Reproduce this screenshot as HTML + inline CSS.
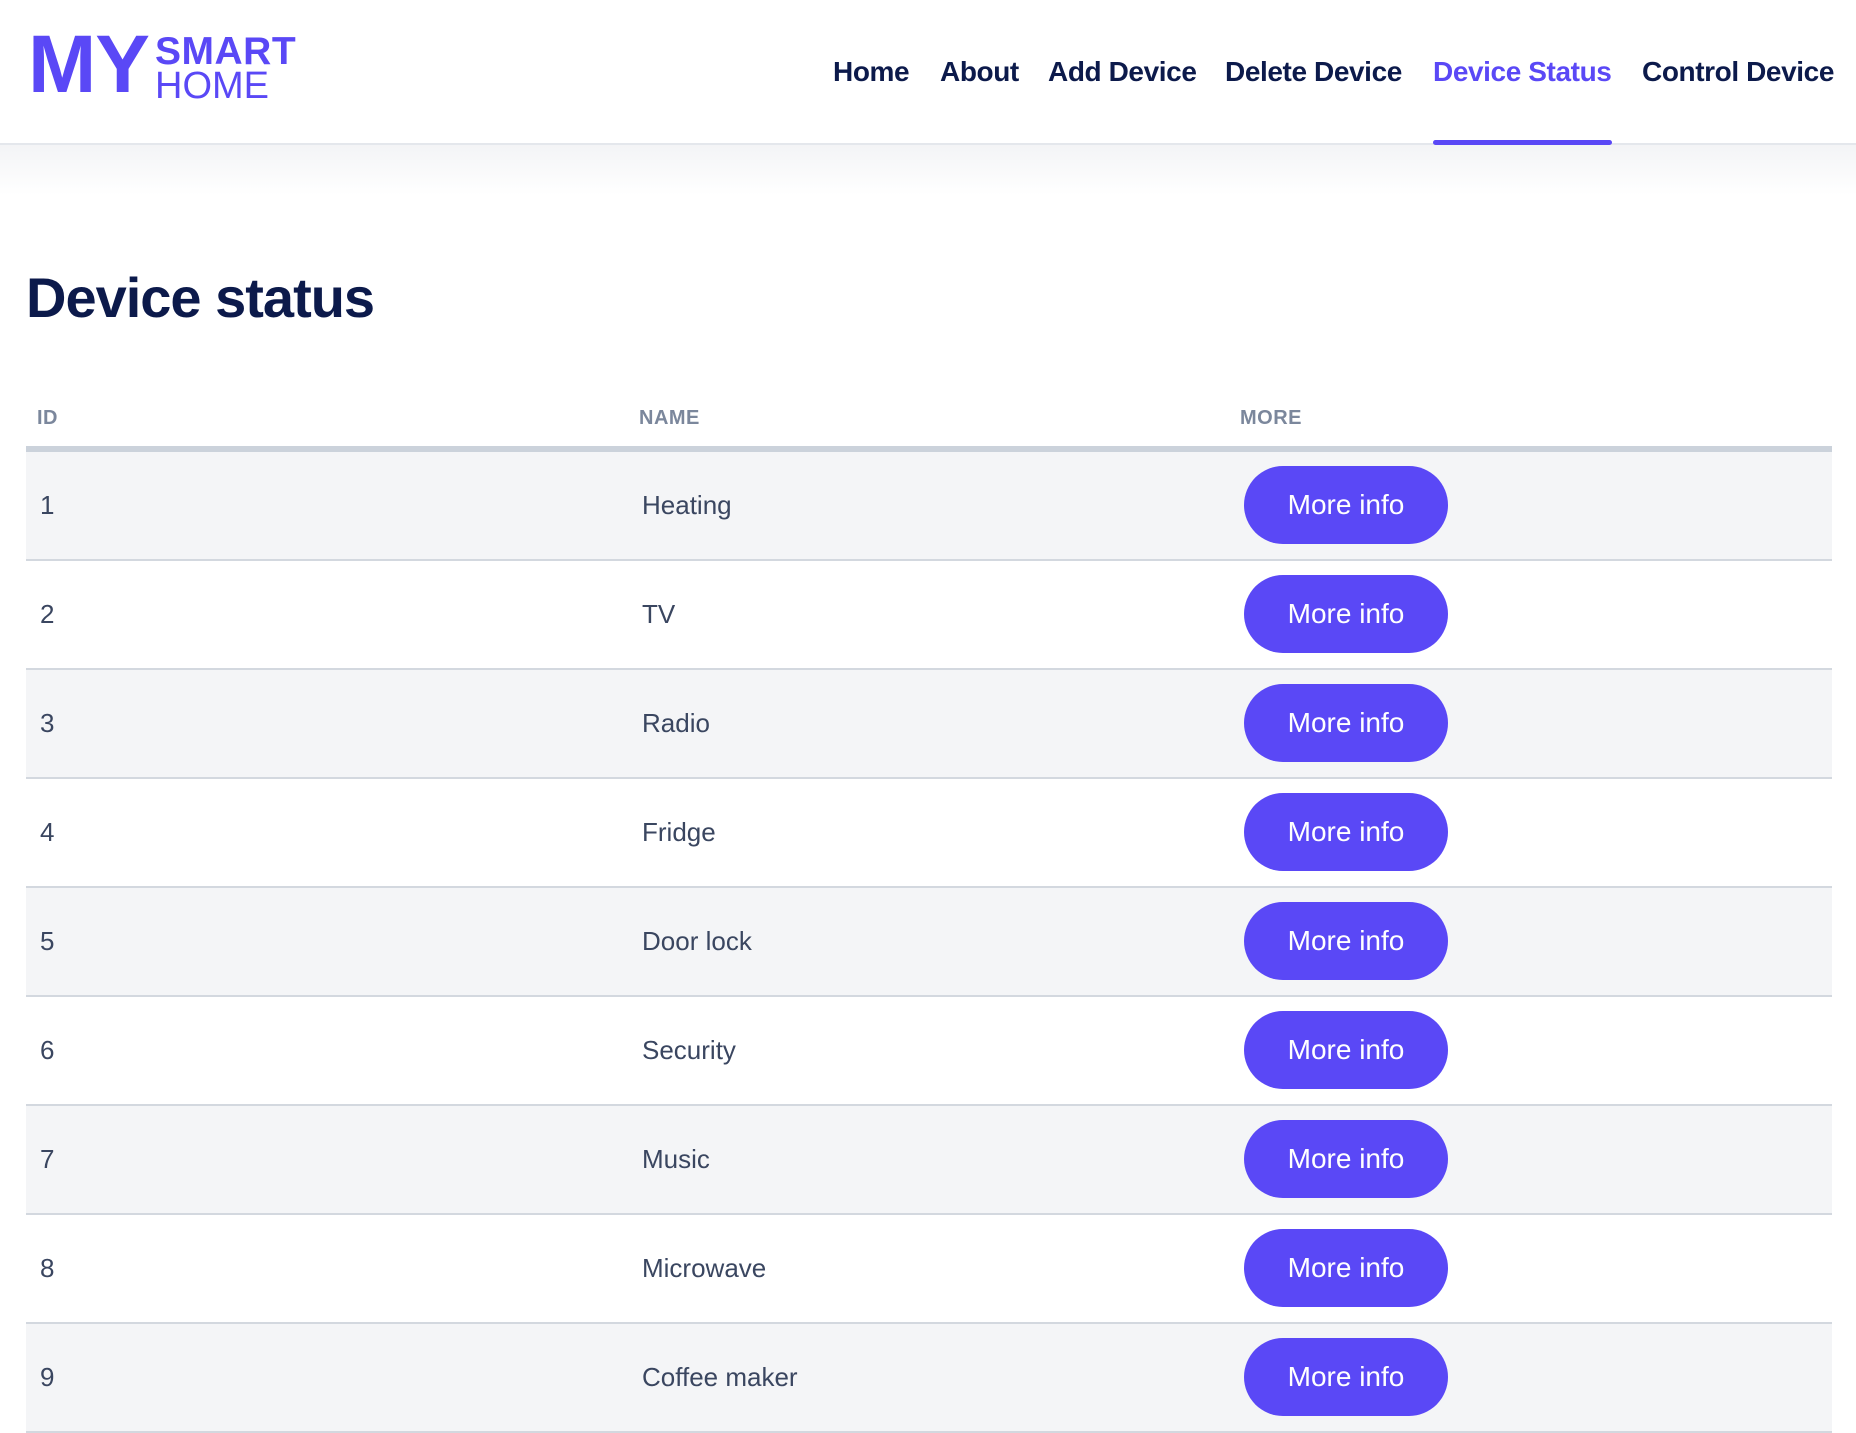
<!DOCTYPE html>
<html><head><meta charset="utf-8"><style>
*{margin:0;padding:0;box-sizing:border-box}
body{width:1856px;height:1432px;overflow:hidden;background:#fff;font-family:"Liberation Sans",sans-serif;position:relative}
.hdr{position:absolute;left:0;top:0;width:1856px;height:145px;border-bottom:2px solid #e4e7ec;background:#fff}
.shadow{position:absolute;left:0;top:145px;width:1856px;height:50px;background:linear-gradient(#f3f4f6,#fff)}
.logo{position:absolute;color:#5a48f6;white-space:nowrap;line-height:1}
.nav{position:absolute;top:56px;font-size:28px;letter-spacing:-0.4px;font-weight:bold;color:#0c1a4b;white-space:nowrap;line-height:32px}
.act{color:#5a48f6}
.ul{position:absolute;left:1433px;top:140px;width:179px;height:5px;background:#5a48f6;border-radius:3px}
h1{position:absolute;left:26px;top:266px;font-size:56px;letter-spacing:-1px;color:#0c1a4b;font-weight:bold;line-height:64px}
.th{position:absolute;top:406px;font-size:20px;font-weight:bold;color:#7b879c;letter-spacing:.5px;line-height:24px}
.thick{position:absolute;left:26px;top:446px;width:1806px;height:6px;background:#cbd2db}
.row{position:absolute;left:26px;width:1806px;height:109px;border-bottom:2px solid #d3d8df}
.row.odd{background:#f4f5f7}
.row span{position:absolute;top:38px;font-size:26px;color:#3a4660;line-height:30px}
.btn{position:absolute;left:1218px;top:14px;width:204px;height:78px;border-radius:39px;background:#5a48f6;color:#fff;font-size:28px;text-align:center;line-height:78px}
</style></head><body>
<div class="hdr"></div>
<div class="shadow"></div>
<div class="logo" style="left:28px;top:24px;font-size:82px;font-weight:bold;letter-spacing:-1px">MY</div>
<div class="logo" style="left:155px;top:32px;font-size:39px;font-weight:bold;letter-spacing:.5px">SMART</div>
<div class="logo" style="left:155px;top:67px;font-size:38px">HOME</div>
<div class="nav" style="left:833px">Home</div>
<div class="nav" style="left:940px">About</div>
<div class="nav" style="left:1048px">Add Device</div>
<div class="nav" style="left:1225px">Delete Device</div>
<div class="nav act" style="left:1433px">Device Status</div>
<div class="nav" style="left:1642px">Control Device</div>
<div class="ul"></div>
<h1>Device status</h1>
<div class="th" style="left:37px">ID</div>
<div class="th" style="left:639px">NAME</div>
<div class="th" style="left:1240px">MORE</div>
<div class="thick"></div>
<div class="row odd" style="top:452px"><span style="left:14px">1</span><span style="left:616px">Heating</span><div class="btn">More info</div></div>
<div class="row" style="top:561px"><span style="left:14px">2</span><span style="left:616px">TV</span><div class="btn">More info</div></div>
<div class="row odd" style="top:670px"><span style="left:14px">3</span><span style="left:616px">Radio</span><div class="btn">More info</div></div>
<div class="row" style="top:779px"><span style="left:14px">4</span><span style="left:616px">Fridge</span><div class="btn">More info</div></div>
<div class="row odd" style="top:888px"><span style="left:14px">5</span><span style="left:616px">Door lock</span><div class="btn">More info</div></div>
<div class="row" style="top:997px"><span style="left:14px">6</span><span style="left:616px">Security</span><div class="btn">More info</div></div>
<div class="row odd" style="top:1106px"><span style="left:14px">7</span><span style="left:616px">Music</span><div class="btn">More info</div></div>
<div class="row" style="top:1215px"><span style="left:14px">8</span><span style="left:616px">Microwave</span><div class="btn">More info</div></div>
<div class="row odd" style="top:1324px"><span style="left:14px">9</span><span style="left:616px">Coffee maker</span><div class="btn">More info</div></div>
</body></html>
